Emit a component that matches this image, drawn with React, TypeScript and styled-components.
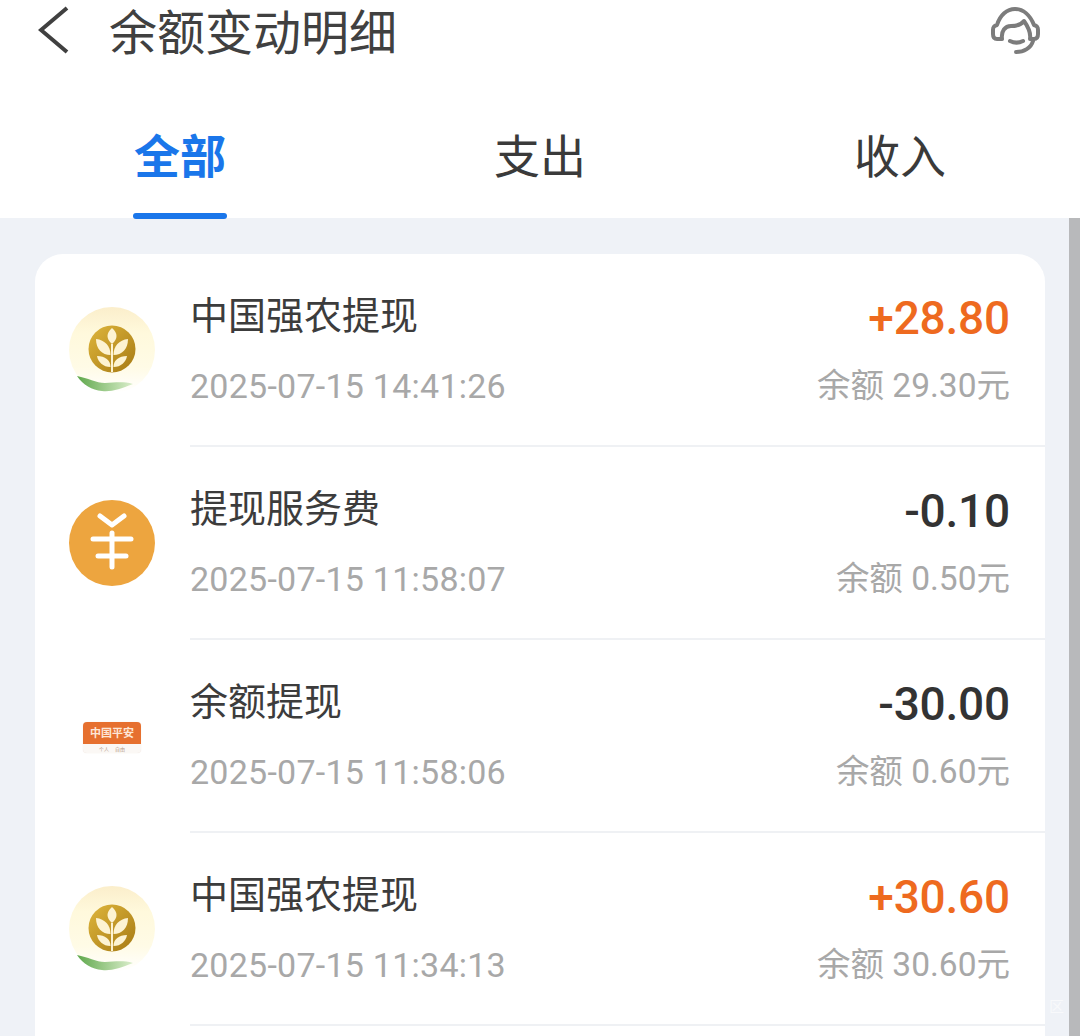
import React, { FC } from "react";
import styled, { createGlobalStyle } from "styled-components";

const GlobalStyle = createGlobalStyle`
  html, body {
    margin: 0;
    padding: 0;
    height: 100%;
    overflow: hidden;
    background: #fff;
    font-family: Roboto, "Noto Sans CJK SC", sans-serif;
  }
`;

const Page = styled.div`
  width: 1080px;
  height: 1036px;
  display: flex;
  flex-direction: column;
  overflow: hidden;
  position: relative;
`;

const Header = styled.header`
  height: 64px;
  display: flex;
  align-items: center;
  padding: 0 38px;
  flex-shrink: 0;
`;

const BackIcon = styled.svg`
  width: 32px;
  height: 50px;
  margin-top: -4px;
`;

const Title = styled.h1`
  margin: -6px 0 0 39px;
  font: 400 48px/56px "Noto Sans CJK SC", sans-serif;
  color: #404040;
  flex: 1;
`;

const ServiceIcon = styled.svg`
  width: 52px;
  height: 52px;
`;

const Tabs = styled.nav`
  height: 154px;
  display: grid;
  grid-template-columns: 360px 360px 360px;
  flex-shrink: 0;
`;

const Tab = styled.div<{ $active?: boolean }>`
  position: relative;
  display: flex;
  justify-content: center;
  padding-top: 55px;
  font: ${(p) => (p.$active ? 700 : 400)} 46px/68px "Noto Sans CJK SC", sans-serif;
  color: ${(p) => (p.$active ? "#1a76ea" : "#3a3a3a")};
  box-sizing: border-box;
`;

const TabLine = styled.span`
  position: absolute;
  bottom: -1px;
  left: 133px;
  width: 94px;
  height: 6px;
  border-radius: 3px;
  background: #1a76ea;
`;

const Body = styled.div`
  flex: 1;
  display: flex;
  min-height: 0;
  background: #eff2f7;
`;

const Content = styled.main`
  flex: 1;
  padding: 36px 24px 0 35px;
`;

const Scrollbar = styled.div`
  width: 11px;
  background: #b8b9bb;
`;

const Card = styled.section`
  background: #fff;
  border-radius: 28px 28px 0 0;
  height: 800px;
`;

const Row = styled.article`
  display: flex;
  height: 193px;
  box-sizing: border-box;
  padding-left: 33px;
`;

const IconSlot = styled.div`
  width: 88px;
  flex-shrink: 0;
  padding-top: 52px;
  margin-right: 36px;
  display: flex;
  justify-content: center;
`;

const RowMain = styled.div`
  flex: 1;
  display: flex;
  justify-content: space-between;
  border-bottom: 2px solid #eff1f4;
  padding-right: 35px;
  margin-left: -2px;
`;

const Left = styled.div`
  display: flex;
  flex-direction: column;
`;

const Right = styled.div`
  display: flex;
  flex-direction: column;
  align-items: flex-end;
`;

const Name = styled.div`
  margin-top: 29px;
  font: 400 38px/60px "Noto Sans CJK SC", sans-serif;
  color: #3c3c3c;
`;

const Time = styled.div`
  margin-top: 13px;
  font: 400 34px/60px Roboto, sans-serif;
  letter-spacing: 0.25px;
  color: #a8a8a8;
`;

const Amount = styled.div<{ $income?: boolean }>`
  margin-top: 34px;
  font: 500 46px/60px Roboto, sans-serif;
  letter-spacing: -0.2px;
  color: ${(p) => (p.$income ? "#ee6a1f" : "#333")};
`;

const Balance = styled.div`
  margin-top: 8px;
  font: 400 33.5px/60px Roboto, "Noto Sans CJK SC", sans-serif;
  color: #a8a8a8;
`;

const Watermark = styled.span`
  position: absolute;
  left: 1049px;
  top: 996px;
  font: 400 15px/20px "Noto Sans CJK SC", sans-serif;
  color: #f8f9fb;
`;

const BadgeSlot = styled.div`
  padding-top: 13px;
`;

const BrandBadge = styled.div`
  margin-top: 17px;
  width: 58px;
  height: 31px;
  border-radius: 4px;
  background: #fbf8f5;
  box-shadow: 0 0 1px #e7d9ce;
  overflow: hidden;
  display: flex;
  flex-direction: column;
`;

const BrandTop = styled.div`
  height: 22px;
  flex-shrink: 0;
  background: #e6702f;
  color: #fde6d6;
  font: 700 11px/21px "Noto Sans CJK SC", sans-serif;
  text-align: center;
`;

const BrandBottom = styled.div`
  font: 400 5px/9px "Noto Sans CJK SC", sans-serif;
  color: #b39a88;
  text-align: center;
  word-spacing: 5px;
`;

const WheatIcon: FC<{ id: string }> = ({ id }) => (
  <svg width="88" height="88" viewBox="0 0 88 88">
    <defs>
      <linearGradient id={`${id}-halo`} x1="0" y1="0" x2="0" y2="1">
        <stop offset="0%" stopColor="#fbeecb" />
        <stop offset="30%" stopColor="#fff9dc" />
        <stop offset="70%" stopColor="#fffbe6" />
        <stop offset="100%" stopColor="#ffffff" />
      </linearGradient>
      <linearGradient id={`${id}-gold`} x1="0" y1="0" x2="1" y2="1">
        <stop offset="0%" stopColor="#dfb63c" />
        <stop offset="100%" stopColor="#a67a14" />
      </linearGradient>
      <linearGradient id={`${id}-leaf`} x1="0" y1="0" x2="1" y2="0">
        <stop offset="0%" stopColor="#5fa84c" />
        <stop offset="100%" stopColor="#dbeecb" />
      </linearGradient>
    </defs>
    <circle cx="44" cy="44" r="43" fill={`url(#${id}-halo)`} />
    <circle cx="44" cy="43" r="23.5" fill={`url(#${id}-gold)`} />
    <g fill="#fdf3d2">
      <path d="M44 22 C50 27 50 33 44 38 C38 33 38 27 44 22Z" />
      <path d="M42.5 49 C34 49 28 43 28 33 C37 34 42.5 40 42.5 49Z" />
      <path d="M45.5 49 C54 49 60 43 60 33 C51 34 45.5 40 45.5 49Z" />
      <path d="M42.5 61 C35 61 30 56 29 50 C37 50 42.5 54 42.5 61Z" />
      <path d="M45.5 61 C53 61 58 56 59 50 C51 50 45.5 54 45.5 61Z" />
      <rect x="43" y="38" width="2" height="28" />
    </g>
    <path d="M9 70 C20 72 28 77 37 77 C46 77 54 75 65 78 C52 83 44 86 34 85 C24 84 15 79 9 70Z" fill={`url(#${id}-leaf)`} />
  </svg>
);

const YuanIcon: FC = () => (
  <svg width="88" height="88" viewBox="0 0 88 88">
    <circle cx="44" cy="44" r="43" fill="#eda53f" />
    <g fill="none" stroke="#fff" strokeWidth="5" strokeLinecap="round" strokeLinejoin="round">
      <path d="M32 17 L44 26 L56 17" />
      <path d="M25 40 H63" />
      <path d="M30 57 H58" />
      <path d="M44 34 V68" />
    </g>
  </svg>
);

const PingAnBadge: FC = () => (
  <BadgeSlot>
    <BrandBadge>
      <BrandTop>中国平安</BrandTop>
      <BrandBottom>个人 自由</BrandBottom>
    </BrandBadge>
  </BadgeSlot>
);

interface RowData {
  name: string;
  time: string;
  amount: string;
  balance: string;
  income?: boolean;
  icon: React.ReactNode;
}

const rows: RowData[] = [
  { name: "中国强农提现", time: "2025-07-15 14:41:26", amount: "+28.80", balance: "余额 29.30元", income: true, icon: <WheatIcon id="w1" /> },
  { name: "提现服务费", time: "2025-07-15 11:58:07", amount: "-0.10", balance: "余额 0.50元", icon: <YuanIcon /> },
  { name: "余额提现", time: "2025-07-15 11:58:06", amount: "-30.00", balance: "余额 0.60元", icon: <PingAnBadge /> },
  { name: "中国强农提现", time: "2025-07-15 11:34:13", amount: "+30.60", balance: "余额 30.60元", income: true, icon: <WheatIcon id="w2" /> },
];

const App: FC = () => (
  <Page>
    <GlobalStyle />
    <Header>
      <BackIcon viewBox="0 0 32 50">
        <path d="M29 3 L3 25 L29 47" fill="none" stroke="#404040" strokeWidth="4" />
      </BackIcon>
      <Title>余额变动明细</Title>
      <ServiceIcon viewBox="0 0 52 52" fill="none" stroke="#7c7c7c" strokeWidth="4" strokeLinecap="round" strokeLinejoin="round">
        <path d="M12 33 H7 C4 33 3 31 3 28 V24 C3 21 4 20 7 19 C10 9 17 3 25 3 C33 3 40 9 44 19 C47 20 48 21 48 24 V28 C48 31 47 33 44 33 H40 C41 27 39 22 34 15 C31 19 26 20 21 20 C15 20 11 25 12 33 Z" />
        <path d="M20 35 C24 37 29 37 33 35" />
        <path d="M43 35 C41 42 34 46 26 46" />
      </ServiceIcon>
    </Header>
    <Tabs>
      <Tab $active>
        全部
        <TabLine />
      </Tab>
      <Tab>支出</Tab>
      <Tab>收入</Tab>
    </Tabs>
    <Body>
      <Content>
        <Card>
          {rows.map((r) => (
            <Row key={r.time}>
              <IconSlot>{r.icon}</IconSlot>
              <RowMain>
                <Left>
                  <Name>{r.name}</Name>
                  <Time>{r.time}</Time>
                </Left>
                <Right>
                  <Amount $income={r.income}>{r.amount}</Amount>
                  <Balance>{r.balance}</Balance>
                </Right>
              </RowMain>
            </Row>
          ))}
        </Card>
      </Content>
      <Scrollbar />
    </Body>
    <Watermark>区</Watermark>
  </Page>
);

export default App;
